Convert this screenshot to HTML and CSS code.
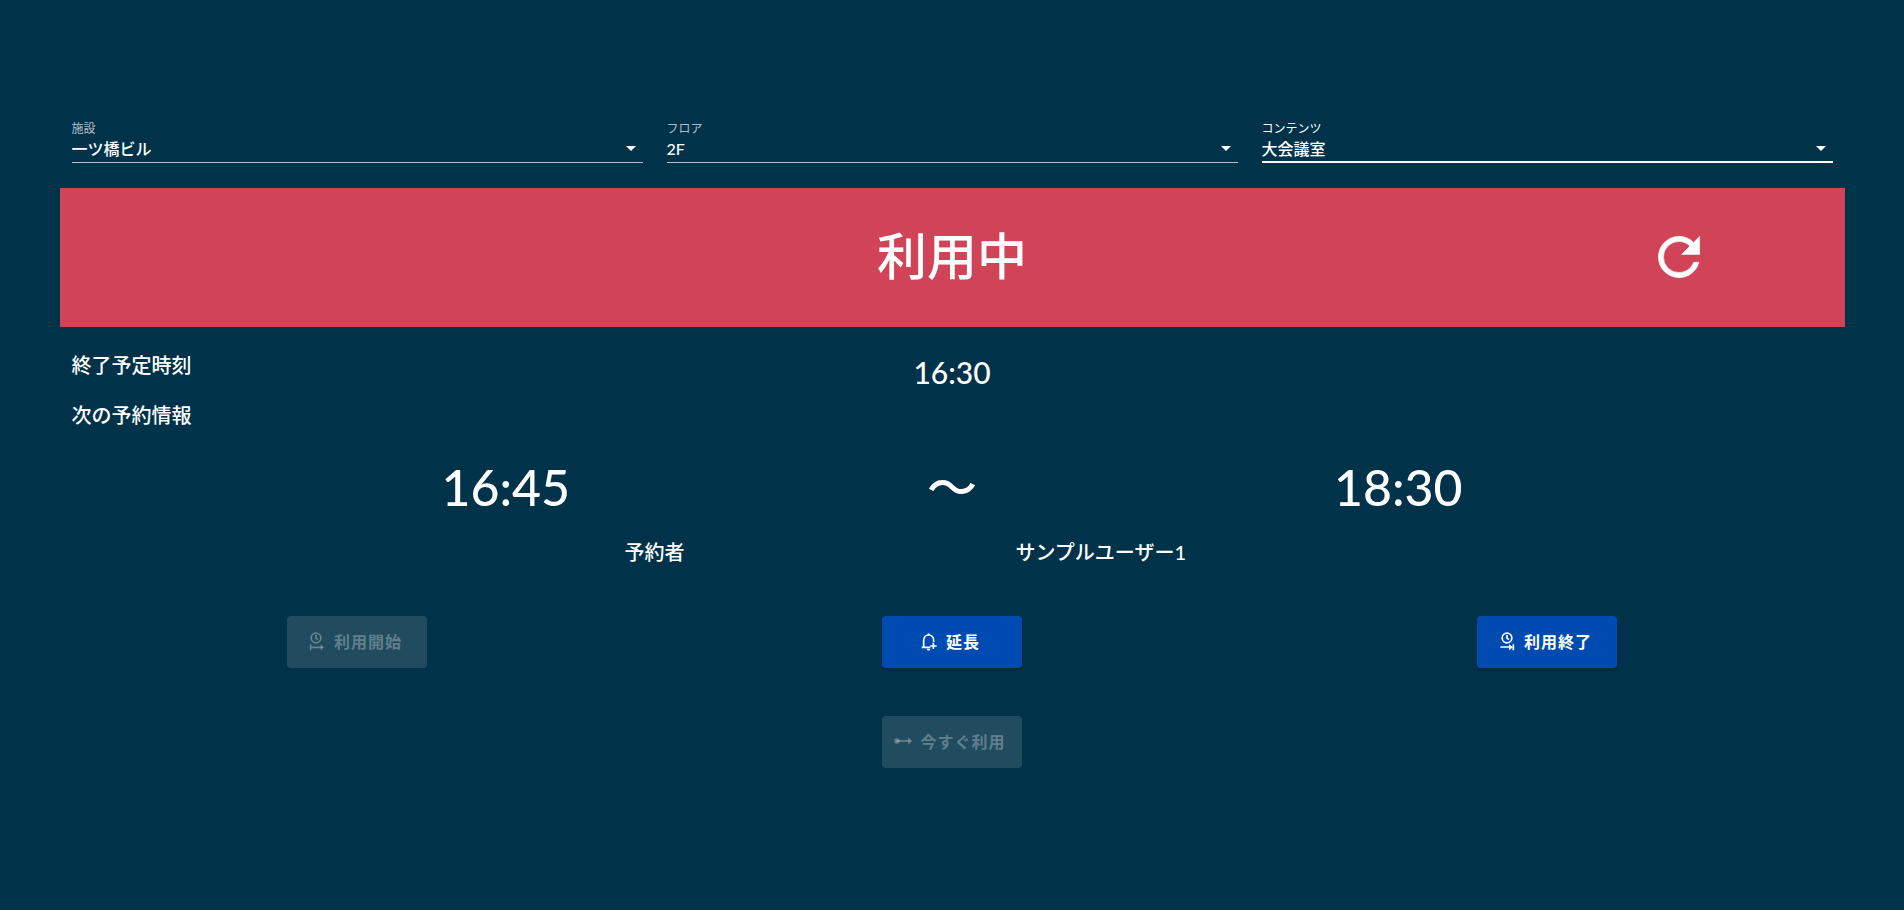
FILE: index.html
```html
<!DOCTYPE html>
<html lang="ja">
  <head>
    <meta charset="UTF-8" />
    <meta name="viewport" content="width=device-width, initial-scale=1.0" />
    <title>会議室利用状況</title>
    <link rel="stylesheet" href="styles.css" />
  </head>
  <body>
    <main class="container">
      <form class="filters">
        <div class="field">
          <label for="facility">施設</label>
          <select id="facility">
            <option>一ツ橋ビル</option>
          </select>
        </div>
        <div class="field">
          <label for="floor">フロア</label>
          <select id="floor">
            <option>2F</option>
          </select>
        </div>
        <div class="field active">
          <label for="contents">コンテンツ</label>
          <select id="contents">
            <option>大会議室</option>
          </select>
        </div>
      </form>

      <section class="status">
        <h1>利用中</h1>
        <button class="refresh-btn" type="button" aria-label="更新">
          <svg viewBox="0 0 24 24">
            <path d="M17.65,6.35C16.2,4.9 14.21,4 12,4A8,8 0 0,0 4,12A8,8 0 0,0 12,20C15.73,20 18.84,17.45 19.73,14H17.65C16.83,16.33 14.61,18 12,18A6,6 0 0,1 6,12A6,6 0 0,1 12,6C13.66,6 15.14,6.69 16.22,7.78L13,11H20V4L17.65,6.35Z" />
          </svg>
        </button>
      </section>

      <section class="info">
        <div class="end-row">
          <h2>終了予定時刻</h2>
          <p class="end-time">16:30</p>
        </div>
        <h2>次の予約情報</h2>
      </section>

      <section class="next">
        <p class="next-start">16:45</p>
        <p class="next-wave">～</p>
        <p class="next-end">18:30</p>
        <p class="owner-label">予約者</p>
        <p class="owner-name">サンプルユーザー1</p>
      </section>

      <section class="actions">
        <button class="btn" type="button" disabled>
          <svg class="icon" viewBox="0 0 54 54">
            <circle cx="24" cy="18" r="14.5" />
            <path d="M24 9V19L30 23M8 37V55M8 46H41" />
            <path class="solid" d="M38 37L48 46L38 55Z" />
          </svg>
          利用開始
        </button>
        <button class="btn" type="button">
          <svg class="icon" viewBox="0 0 54 54">
            <path d="M5 46H31M11 45V26C11 16 17 9 26 9S41 16 41 26V30M40 32V51M31 42H50" />
            <path class="solid" d="M22 9A4 5 0 0 1 30 9ZM20 50H31A5 5 0 0 1 20 50Z" />
          </svg>
          延長
        </button>
        <button class="btn" type="button">
          <svg class="icon" viewBox="0 0 54 54">
            <circle cx="27" cy="18" r="14.5" />
            <path d="M27 9V19L33 23M7 45H38M46 37V55" />
            <path class="solid" d="M33 37L45 46L33 55Z" />
          </svg>
          利用終了
        </button>
        <button class="btn use-now" type="button" disabled>
          <svg class="icon" viewBox="0 0 54 54">
            <circle class="solid" cx="9" cy="27" r="8" />
            <path d="M9 27H46" />
            <path class="solid" d="M43 16L54 27L43 38Z" />
          </svg>
          今すぐ利用
        </button>
      </section>
    </main>
  </body>
</html>
```

FILE: styles.css
```css
* {
  box-sizing: border-box;
}
body {
  margin: 0;
  min-height: 100vh;
  background: #003249;
  color: #fff;
  font-family: Lato, "Noto Sans CJK JP", sans-serif;
}
h1,
h2,
p {
  margin: 0;
  font-weight: 400;
}
.container {
  max-width: 1785px;
  margin: 0 auto;
  padding: 121px 0 48px;
}

/* filters */
.filters {
  display: grid;
  grid-template-columns: repeat(3, 1fr);
  margin-bottom: 25px;
}
.field {
  position: relative;
  padding: 0 12px;
}
.field label {
  display: block;
  font-size: 12px;
  line-height: 16px;
  color: rgba(255, 255, 255, 0.7);
}
.field select {
  display: block;
  width: 100%;
  height: 26px;
  padding: 0 0 2px;
  border: none;
  border-bottom: 1px solid rgba(255, 255, 255, 0.7);
  border-radius: 0;
  background: transparent;
  color: #fff;
  font-family: inherit;
  font-size: 16px;
  font-weight: 500;
  appearance: none;
  outline: none;
}
.field option {
  color: #000;
}
.field::after {
  content: "";
  position: absolute;
  right: 19px;
  bottom: 12px;
  border: 5px solid transparent;
  border-top-color: #fff;
  border-bottom: none;
  pointer-events: none;
}
.field.active label {
  color: #fff;
}
.field.active select {
  padding-bottom: 1px;
  border-bottom: 2px solid #fff;
}

/* status banner */
.status {
  display: grid;
  grid-template-columns: repeat(3, 1fr);
  align-items: center;
  padding: 32px 0 34px;
  background: #d14357;
}
.status h1 {
  grid-column: 2;
  font-size: 50px;
  font-weight: 500;
  line-height: 73px;
  text-align: center;
}
.refresh-btn {
  justify-self: end;
  width: 62px;
  height: 62px;
  margin-right: 135px;
  padding: 0;
  border: none;
  background: none;
  cursor: pointer;
}
.refresh-btn svg {
  display: block;
  fill: #fff;
  stroke: #fff;
  stroke-width: 0.2;
}

/* reservation info */
.info {
  padding: 13px 12px 0;
}
.info h2 {
  font-size: 20px;
  font-weight: 500;
  line-height: 50px;
}
.end-row {
  display: grid;
  grid-template-columns: repeat(3, 1fr);
}
.end-time {
  height: 50px;
  padding-top: 10px;
  font-size: 30px;
  font-weight: 500;
  line-height: 44px;
  text-align: center;
}
.next {
  display: grid;
  grid-template-columns: repeat(12, 1fr);
  padding-top: 10px;
  font-weight: 500;
  text-align: center;
}
.next p {
  font-weight: 500;
}
.next-start,
.next-wave,
.next-end {
  font-size: 50px;
  line-height: 74px;
}
.next-start {
  grid-column: 3 / span 2;
}
.next-wave {
  grid-column: 5 / span 4;
}
.next-end {
  grid-column: 9 / span 2;
}
.owner-label,
.owner-name {
  font-size: 20px;
  line-height: 56px;
}
.owner-label {
  grid-column: 3 / span 4;
}
.owner-name {
  grid-column: 7 / span 2;
}

/* buttons */
.actions {
  display: grid;
  grid-template-columns: repeat(3, 1fr);
  justify-items: center;
  row-gap: 48px;
  padding-top: 36px;
}
.btn {
  display: flex;
  align-items: center;
  justify-content: center;
  gap: 8px;
  width: 140px;
  height: 52px;
  padding: 0 4px 2px 0;
  border: none;
  border-radius: 4px;
  background: #004bb1;
  color: #fff;
  font-family: inherit;
  font-size: 16px;
  font-weight: 700;
  letter-spacing: 1px;
  white-space: nowrap;
  box-shadow: 0 2px 3px rgba(0, 0, 0, 0.2);
  cursor: pointer;
}
.btn:disabled {
  background: rgba(255, 255, 255, 0.13);
  color: rgba(255, 255, 255, 0.3);
  box-shadow: none;
  cursor: default;
}
.icon {
  flex: none;
  width: 18px;
  height: 18px;
  overflow: visible;
  fill: none;
  stroke: currentColor;
  stroke-width: 5;
}
.icon .solid {
  fill: currentColor;
  stroke: none;
}
.use-now {
  grid-column: 2;
}
```
